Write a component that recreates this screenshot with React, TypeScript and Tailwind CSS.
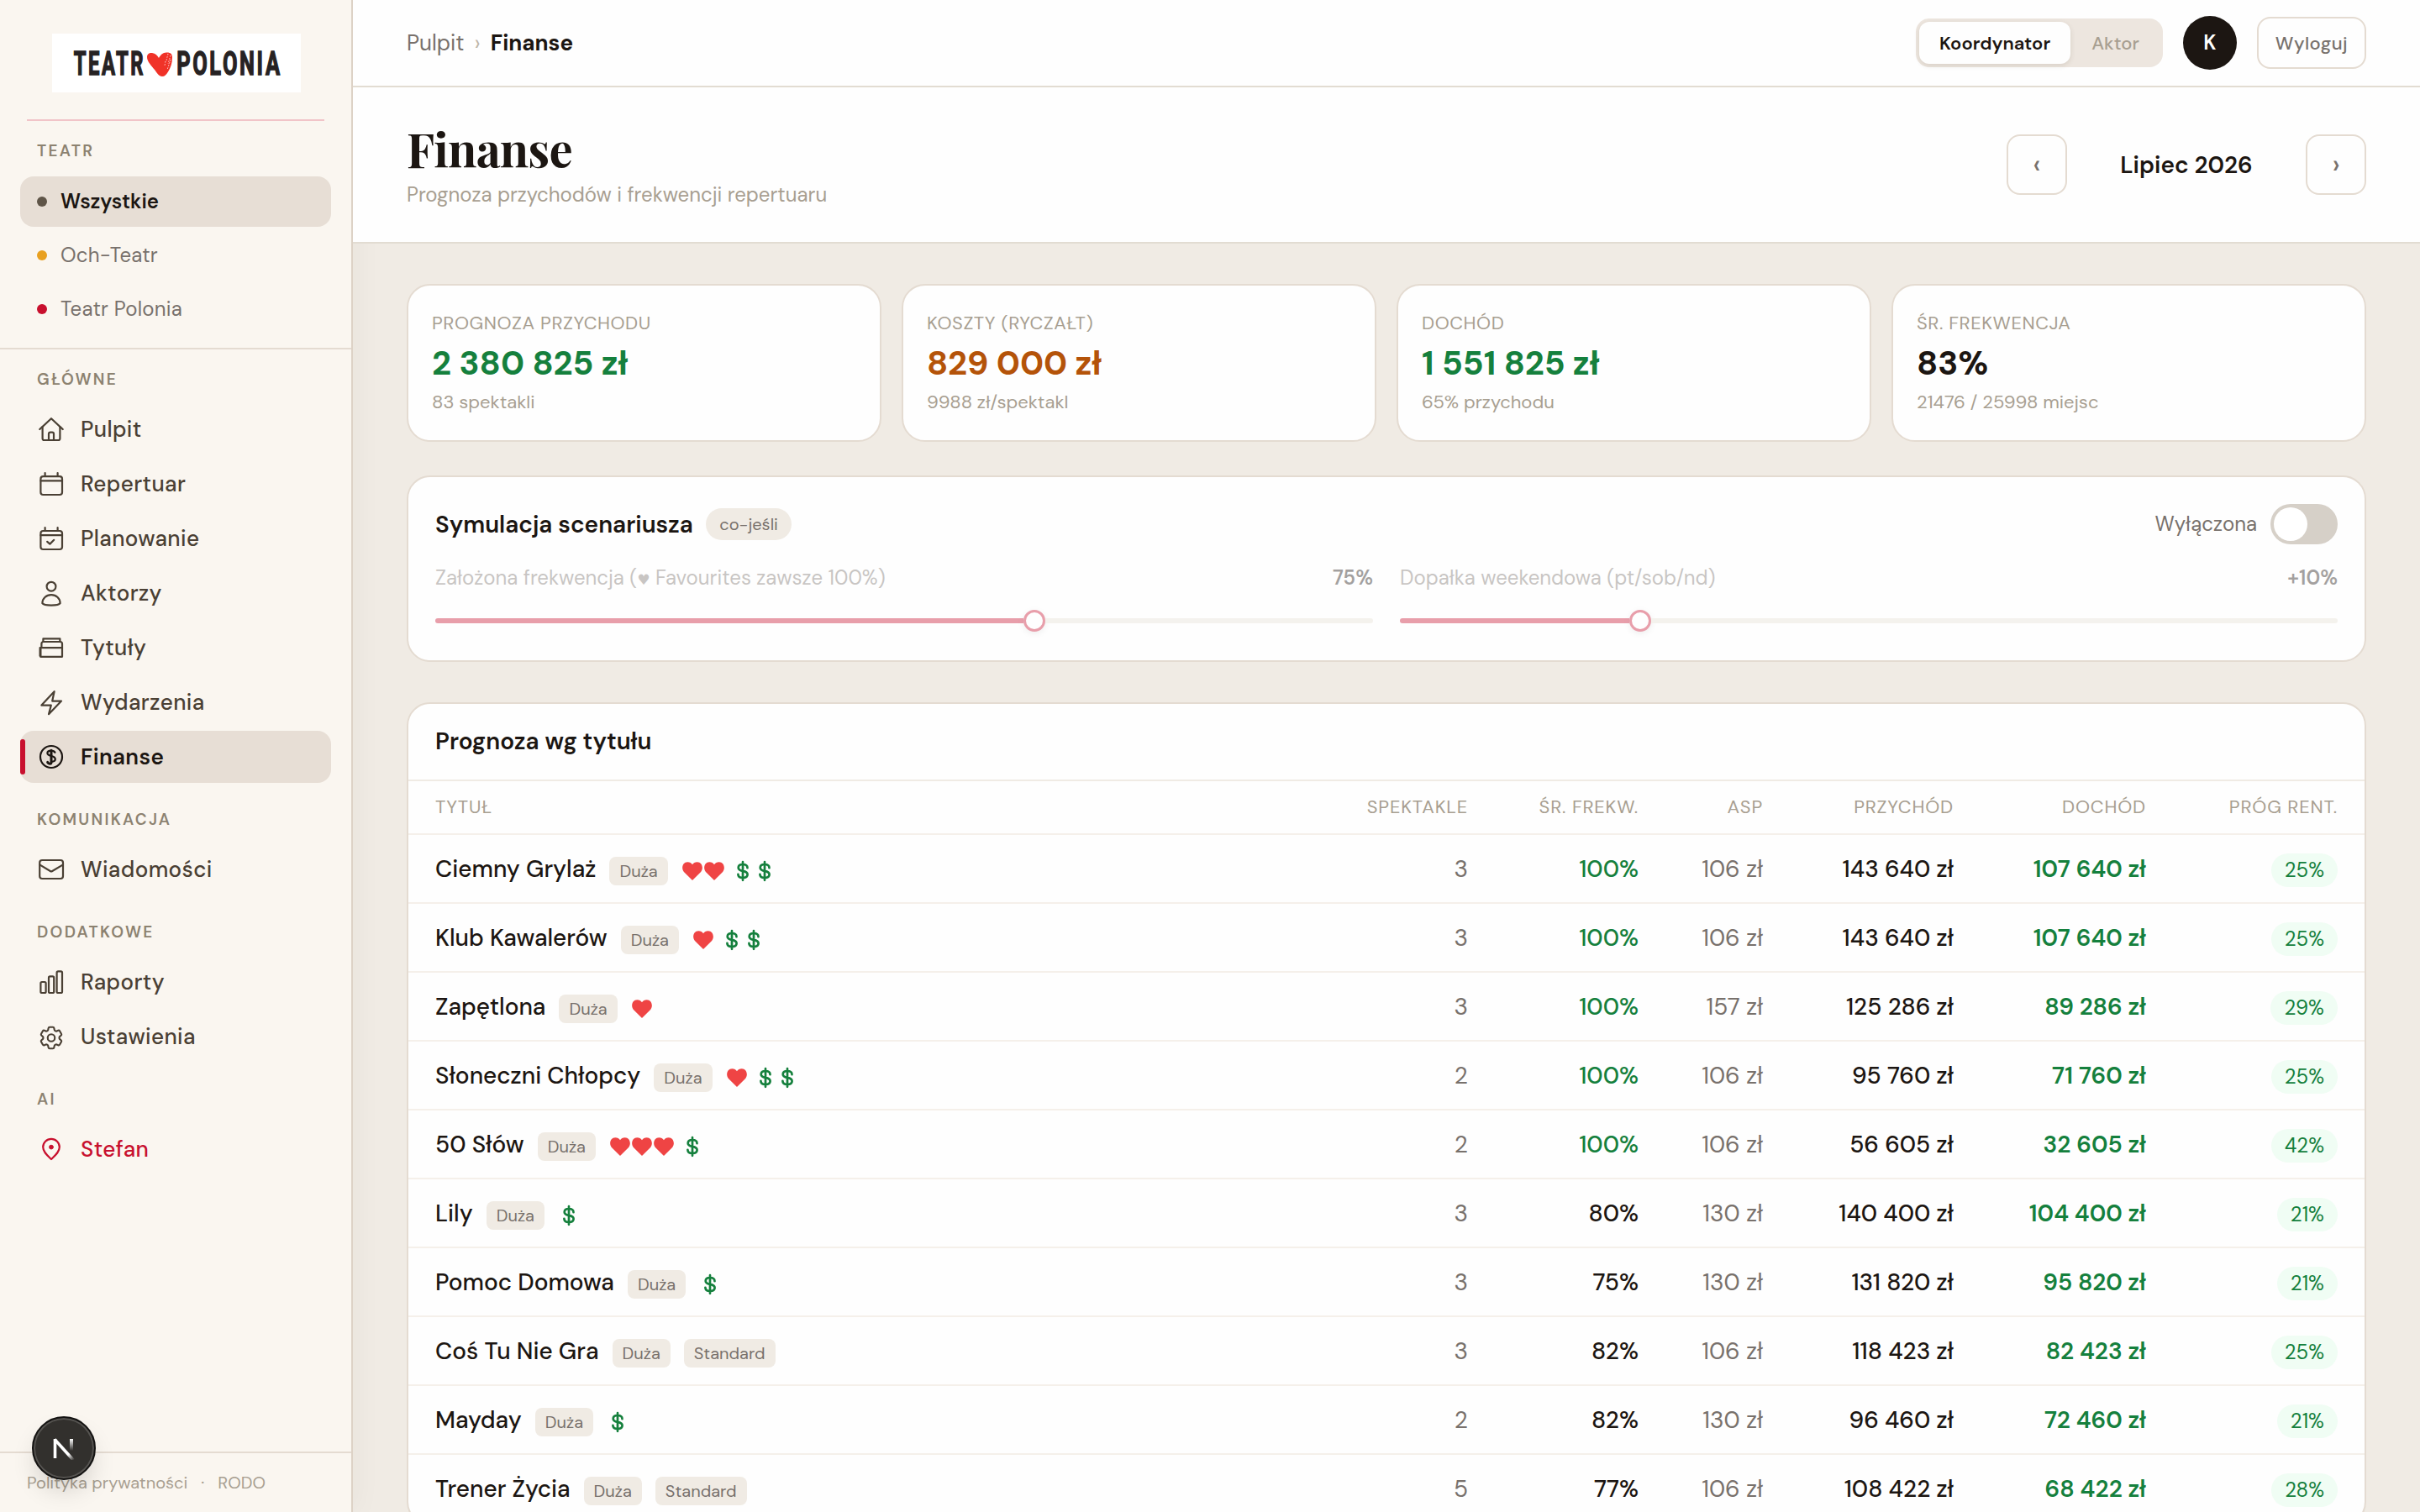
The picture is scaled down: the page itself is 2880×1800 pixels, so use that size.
import React, { ReactNode } from 'react';
import { HiOutlineCog6Tooth } from 'react-icons/hi2';

interface IconProps {
  children: ReactNode;
}

// Shared frame for the sidebar line icons
const Icon: React.FC<IconProps> = ({ children }) => (
  <svg viewBox="0 0 34 34" className="h-[34px] w-[34px] shrink-0" fill="none" stroke="currentColor" strokeWidth="2.2" strokeLinecap="round" strokeLinejoin="round">
    {children}
  </svg>
);

const icons: Record<string, ReactNode> = {
  home: (
    <Icon>
      <path d="M3.3 17 17 4.2 30.7 17" />
      <path d="M6.6 14.2V28a2 2 0 0 0 2 2h16.8a2 2 0 0 0 2-2V14.2" />
      <path d="M14 30v-7.4a2 2 0 0 1 2-2h2a2 2 0 0 1 2 2V30" />
    </Icon>
  ),
  calendar: (
    <Icon>
      <rect x="4.4" y="8.2" width="25.6" height="21.8" rx="3" />
      <path d="M4.4 13.4H30M9.6 4v4M24.6 4v4" />
    </Icon>
  ),
  plan: (
    <Icon>
      <rect x="4.4" y="8" width="25.6" height="22" rx="3" />
      <path d="M4.4 13.2H30M9.6 4v4M24.6 4v4" />
      <path d="m12.2 20.8 3.2 2.8 4.8-4.8" />
    </Icon>
  ),
  user: (
    <Icon>
      <circle cx="17" cy="9.2" r="5.4" />
      <path d="M6.4 29.2c0-5.8 4.6-10 10.6-10s10.6 4.2 10.6 10c-1 1.6-5.6 2.4-10.6 2.4s-9.6-.8-10.6-2.4Z" />
    </Icon>
  ),
  titles: (
    <Icon>
      <path d="M7.4 9.6V6.4h20v3.2" />
      <path d="M5.4 17v-4.6a2.4 2.4 0 0 1 2.4-2.4h19.8a2.4 2.4 0 0 1 2.4 2.4v15.4H4.2" />
      <path d="M3.6 17.2H30" />
      <path strokeWidth="3" d="M4 18.6v8" />
    </Icon>
  ),
  bolt: (
    <Icon>
      <path d="M20.6 4.2 5.4 20.6h11.4L14 31.2l15-15.6H18.2Z" />
    </Icon>
  ),
  money: (
    <Icon>
      <circle cx="17" cy="17" r="13" />
      <path d="M21.4 11.8c-.8-1.6-2.4-2.2-4.4-2.2-2.8 0-4.6 1-4.6 3s2 2.8 4.6 3.4 4.8 1.6 4.8 3.8-2.2 3-4.8 3" />
      <path strokeWidth="3" d="M17 9.2v14.6c0 1-.6 1.400-1.400 1.400-1.400 0-2.600-.6-3-1.800" />
    </Icon>
  ),
  mail: (
    <Icon>
      <rect x="3.2" y="6" width="27.8" height="22" rx="3" />
      <path d="m3.6 11.6 12.6 7.6c.5.3 1.1.3 1.6 0l12.8-7.6" />
    </Icon>
  ),
  bars: (
    <Icon>
      <rect x="4.4" y="17" width="6.2" height="13" rx="1.6" />
      <rect x="14" y="10.4" width="6.2" height="19.6" rx="1.6" />
      <rect x="23.6" y="4.4" width="6.4" height="25.6" rx="1.6" />
    </Icon>
  ),
  gear: <HiOutlineCog6Tooth className="h-[35px] w-[34px] shrink-0 translate-y-px" />,
  pin: (
    <Icon>
      <path d="M17 29C12.6 24.8 7.2 20.6 7.2 14.6a9.8 9.8 0 0 1 19.6 0c0 6-5.4 10.2-9.8 14.4Z" />
      <circle cx="17" cy="14.6" r="2.4" fill="currentColor" strokeWidth="1" />
    </Icon>
  ),
};

const theatres = [
  { name: 'Wszystkie', dot: 'bg-[#5f5548]', active: true },
  { name: 'Och-Teatr', dot: 'bg-[#e8a020]', active: false },
  { name: 'Teatr Polonia', dot: 'bg-[#c8102e]', active: false },
];

const sections = [
  {
    label: 'GŁÓWNE',
    items: [
      { name: 'Pulpit', icon: 'home' },
      { name: 'Repertuar', icon: 'calendar' },
      { name: 'Planowanie', icon: 'plan' },
      { name: 'Aktorzy', icon: 'user' },
      { name: 'Tytuły', icon: 'titles' },
      { name: 'Wydarzenia', icon: 'bolt' },
      { name: 'Finanse', icon: 'money' },
    ],
  },
  { label: 'KOMUNIKACJA', items: [{ name: 'Wiadomości', icon: 'mail' }] },
  {
    label: 'DODATKOWE',
    items: [
      { name: 'Raporty', icon: 'bars' },
      { name: 'Ustawienia', icon: 'gear' },
    ],
  },
  { label: 'AI', items: [{ name: 'Stefan', icon: 'pin' }] },
];

const stats = [
  { label: 'PROGNOZA PRZYCHODU', value: '2 380 825 zł', sub: '83 spektakli', color: 'text-[#15803d]' },
  { label: 'KOSZTY (RYCZAŁT)', value: '829 000 zł', sub: '9988 zł/spektakl', color: 'text-[#b45309]' },
  { label: 'DOCHÓD', value: '1 551 825 zł', sub: '65% przychodu', color: 'text-[#15803d]' },
  { label: 'ŚR. FREKWENCJA', value: '83%', sub: '21476 / 25998 miejsc', color: 'text-[#1c1612]' },
];

interface Title {
  name: string;
  tags: string[];
  hearts: number;
  dollars: number;
  shows: number;
  fill: number;
  asp: string;
  revenue: string;
  profit: string;
  threshold: string;
}

const titles: Title[] = [
  { name: 'Ciemny Grylaż', tags: ['Duża'], hearts: 2, dollars: 2, shows: 3, fill: 100, asp: '106 zł', revenue: '143 640 zł', profit: '107 640 zł', threshold: '25%' },
  { name: 'Klub Kawalerów', tags: ['Duża'], hearts: 1, dollars: 2, shows: 3, fill: 100, asp: '106 zł', revenue: '143 640 zł', profit: '107 640 zł', threshold: '25%' },
  { name: 'Zapętlona', tags: ['Duża'], hearts: 1, dollars: 0, shows: 3, fill: 100, asp: '157 zł', revenue: '125 286 zł', profit: '89 286 zł', threshold: '29%' },
  { name: 'Słoneczni Chłopcy', tags: ['Duża'], hearts: 1, dollars: 2, shows: 2, fill: 100, asp: '106 zł', revenue: '95 760 zł', profit: '71 760 zł', threshold: '25%' },
  { name: '50 Słów', tags: ['Duża'], hearts: 3, dollars: 1, shows: 2, fill: 100, asp: '106 zł', revenue: '56 605 zł', profit: '32 605 zł', threshold: '42%' },
  { name: 'Lily', tags: ['Duża'], hearts: 0, dollars: 1, shows: 3, fill: 80, asp: '130 zł', revenue: '140 400 zł', profit: '104 400 zł', threshold: '21%' },
  { name: 'Pomoc Domowa', tags: ['Duża'], hearts: 0, dollars: 1, shows: 3, fill: 75, asp: '130 zł', revenue: '131 820 zł', profit: '95 820 zł', threshold: '21%' },
  { name: 'Coś Tu Nie Gra', tags: ['Duża', 'Standard'], hearts: 0, dollars: 0, shows: 3, fill: 82, asp: '106 zł', revenue: '118 423 zł', profit: '82 423 zł', threshold: '25%' },
  { name: 'Mayday', tags: ['Duża'], hearts: 0, dollars: 1, shows: 2, fill: 82, asp: '130 zł', revenue: '96 460 zł', profit: '72 460 zł', threshold: '21%' },
  { name: 'Trener Życia', tags: ['Duża', 'Standard'], hearts: 0, dollars: 0, shows: 5, fill: 77, asp: '106 zł', revenue: '108 422 zł', profit: '68 422 zł', threshold: '28%' },
];

const columns = ['SPEKTAKLE', 'ŚR. FREKW.', 'ASP', 'PRZYCHÓD', 'DOCHÓD', 'PRÓG RENT.'];

const Heart = () => (
  <svg viewBox="0 0 26 26" className="h-[26px] w-[26px]" fill="#ef4444">
    <path d="M13 24 2.900 13.900C-.6 9.900 1.300 2.300 7.300 2.300c2.500 0 4.500 1.100 5.700 3 1.200-1.900 3.200-3 5.700-3 6 0 7.900 7.600 4.400 11.600Z" />
  </svg>
);

const Dollar = () => (
  <svg viewBox="0 0 26 26" className="h-[26px] w-[26px]" fill="none" stroke="#15803d" strokeWidth="2.7" strokeLinecap="round">
    <path d="M13 2.200v21.600M18.500 9.200c0-2.800-2.400-4.200-5.500-4.200s-5.300 1.400-5.300 3.900 2.200 3.400 5.300 4 5.600 1.500 5.600 4.200-2.500 3.900-5.600 3.900-5.600-1.400-5.600-4.200" />
  </svg>
);

const Logo = () => (
  <svg viewBox="0 0 296 70" className="h-[70px] w-[296px] bg-white">
    <g transform="scale(.6 1)" fill="#262223" stroke="#262223" strokeWidth="1.4" fontFamily="Roboto, sans-serif" fontWeight="700" fontSize="39" letterSpacing="4">
      <text x="43" y="49.5" textLength="142" lengthAdjust="spacingAndGlyphs">TEATR</text>
      <text x="247" y="49.5" textLength="209" lengthAdjust="spacingAndGlyphs">POLONIA</text>
    </g>
    <path fill="#f03228" d="M131 51c-4 0-6-4-9-8-4-5-9-10-9-15 0-4 3-5.5 6-5 4 .5 6 3 8 6 2-3.5 5-7 10-6.5 4 0 6 2 6 6 0 7-2 12-5 17-2 3.5-4 5.5-7 5.5Z" />
    <path stroke="#fff" strokeWidth=".8" strokeDasharray="1.5 1.8" fill="none" d="m138 24-2 8m5-6-3 10m3-5-4 12m-2-10-1 5" />
  </svg>
);

const Sidebar = () => (
  <aside className="relative z-10 flex w-[420px] shrink-0 flex-col border-r-2 border-[#ddd2c6] bg-[#faf6f0] shadow-[4px_0_32px_rgba(60,40,20,0.04)]">
    <div className="flex justify-center pt-10 pl-0.5">
      <Logo />
    </div>
    <div className="mx-8 mt-8 h-0.5 bg-[#f1c4c8]" />

    <div className="border-b-2 border-[#e4dbd1] px-6 pb-4">
      <p className="px-5 pt-[25px] pb-[19px] text-[19px] leading-[22px] font-semibold tracking-[0.12em] text-[#8c8270]">TEATR</p>
      <div className="flex flex-col gap-1">
        {theatres.map((t) => (
          <div
            key={t.name}
            className={
              t.active
                ? 'flex h-[60px] items-center gap-4 rounded-2xl bg-[#e7ded5] px-5 text-2xl font-semibold text-[#1c1612]'
                : 'flex h-[60px] items-center gap-4 rounded-2xl px-5 text-2xl tracking-[0.01em] text-[#78716c]'
            }
          >
            <span className={`h-3 w-3 rounded-full ${t.dot}`} />
            {t.name}
          </div>
        ))}
      </div>
    </div>

    <nav className="px-6">
      {sections.map((s, i) => (
        <div key={s.label}>
          <p className={`px-5 pb-[17px] text-[19px] leading-[22px] font-semibold tracking-[0.12em] text-[#8c8270] ${i === 0 ? 'pt-[25px]' : 'pt-[33px]'}`}>
            {s.label}
          </p>
          <div className="flex flex-col gap-[3px]">
            {s.items.map((item) => {
              const active = item.name === 'Finanse';
              const color = active ? 'bg-[#e7ded5] font-semibold text-[#1c1612]' : item.name === 'Stefan' ? 'font-medium text-[#c8102e]' : 'font-medium text-[#4a4034]';
              return (
                <div key={item.name} className={`relative flex h-[62px] items-center gap-[18px] rounded-2xl px-5 text-[26px] tracking-[0.015em] ${color}`}>
                  {active && <span className="absolute left-0 h-[42px] w-1.5 rounded-full bg-[#c8102e]" />}
                  {icons[item.icon]}
                  {item.name}
                </div>
              );
            })}
          </div>
        </div>
      ))}
    </nav>

    <footer className="mt-auto flex h-[72px] items-center gap-4 border-t-2 border-[#e4dbd1] px-8 text-xl text-[#a89f91]">
      <span>Polityka prywatności</span>
      <span>·</span>
      <span>RODO</span>
    </footer>

    {/* dev tools badge */}
    <div className="absolute bottom-[38px] left-[38px] flex h-[76px] w-[76px] items-center justify-center rounded-full border-2 border-[#141312] bg-[#32302d] shadow-[inset_0_0_0_2px_#555350,0_16px_32px_-8px_rgba(0,0,0,0.2)]">
      <svg viewBox="0 0 28 28" className="h-7 w-7" fill="none" strokeWidth="3.6">
        <defs>
          <linearGradient id="diag" x1="14" y1="14" x2="26" y2="28" gradientUnits="userSpaceOnUse">
            <stop offset="0.5" stopColor="#fff" />
            <stop offset="1" stopColor="#fff" stopOpacity="0" />
          </linearGradient>
          <linearGradient id="stem" x1="0" y1="3" x2="0" y2="17" gradientUnits="userSpaceOnUse">
            <stop stopColor="#fff" />
            <stop offset="1" stopColor="#fff" stopOpacity="0" />
          </linearGradient>
        </defs>
        <path stroke="#fff" d="M3.5 26V3" />
        <path stroke="url(#diag)" d="M3 3.5 26 29" />
        <rect x="21" y="3" width="4" height="15" fill="url(#stem)" />
      </svg>
    </div>
  </aside>
);

const Topbar = () => (
  <header className="flex h-[104px] items-center justify-between border-b-2 border-[#e2dcd2] bg-[#fefefe] px-16">
    <div className="flex items-center gap-3 text-[26px]">
      <span className="text-[#78716c]">Pulpit</span>
      <span className="text-[#bfb6a8]">›</span>
      <span className="font-bold text-[#1c1612]">Finanse</span>
    </div>
    <div className="flex items-center gap-6">
      <div className="flex h-[58px] gap-px rounded-2xl bg-[#ede6df] p-1 text-[22px] font-semibold">
        <span className="flex items-center rounded-xl bg-[#fefefe] px-6 text-[#1c1612] shadow-[0_2px_6px_rgba(60,40,20,0.12)]">Koordynator</span>
        <span className="flex items-center px-6 font-medium text-[#a89f91]">Aktor</span>
      </div>
      <span className="flex h-16 w-16 items-center justify-center rounded-full bg-[#1c1612] text-2xl font-semibold text-white">K</span>
      <span className="flex h-[62px] items-center rounded-2xl border-2 border-[#e4dbd1] px-5 text-[22px] font-medium tracking-[0.02em] text-[#78716c]">Wyloguj</span>
    </div>
  </header>
);

const PageHeader = () => (
  <section className="flex h-[186px] items-start justify-between border-b-2 border-[#e2dcd2] bg-[#fefefe] px-16 pt-10">
    <div>
      <h1 className="font-['Playfair_Display','Liberation_Serif',serif] text-[56px] leading-[66px] font-bold tracking-[-0.015em] text-[#1c1612]">Finanse</h1>
      <p className="mt-1 text-2xl leading-9 text-[#a89f91]">Prognoza przychodów i frekwencji repertuaru</p>
    </div>
    <div className="mt-4 flex items-center gap-4 text-[28px] text-[#78716c]">
      <span className="flex h-[72px] w-[72px] items-center justify-center rounded-2xl border-2 border-[#e4dbd1] text-[32px] font-medium">‹</span>
      <span className="w-[252px] pt-0.5 text-center font-semibold text-[#1c1612]">Lipiec 2026</span>
      <span className="flex h-[72px] w-[72px] items-center justify-center rounded-2xl border-2 border-[#e4dbd1] text-[32px] font-medium">›</span>
    </div>
  </section>
);

interface SliderProps {
  label: ReactNode;
  value: string;
  ratio: number;
}

const Slider: React.FC<SliderProps> = ({ label, value, ratio }) => (
  <div>
    <div className="flex h-9 justify-between text-2xl leading-9">
      <span className="text-[#78716c]">{label}</span>
      <span className="font-semibold text-[#1c1612]">{value}</span>
    </div>
    <div className="mt-5 flex h-[26px] items-center">
      <div className="h-1.5 rounded-l-full bg-[#c8102e]" style={{ width: `calc((100% - 26px) * ${ratio})` }} />
      <div className="h-[26px] w-[26px] shrink-0 rounded-full border-[3px] border-[#c8102e] bg-white shadow-[0_2px_6px_rgba(0,0,0,0.15)]" />
      <div className="h-1.5 flex-1 rounded-r-full bg-[#e7e1d6]" />
    </div>
  </div>
);

const Simulation = () => (
  <section className="mt-10 h-[222px] rounded-[28px] border-2 border-[#e4dbd1] bg-[#fefefe] px-8 pt-8">
    <div className="flex h-12 items-center justify-between">
      <div className="flex items-center gap-[15px]">
        <h2 className="pt-0.5 text-[28px] font-semibold text-[#1c1612]">Symulacja scenariusza</h2>
        <span className="flex h-[38px] items-center rounded-full bg-[#f0ebe4] px-[16.5px] text-xl text-[#78716c]">co-jeśli</span>
      </div>
      <div className="flex items-center gap-4">
        <span className="text-2xl text-[#78716c]">Wyłączona</span>
        <span className="flex h-12 w-20 items-center rounded-full bg-[#d6d0c8] px-1">
          <span className="h-10 w-10 rounded-full bg-white" />
        </span>
      </div>
    </div>
    <div className="mt-[22px] grid grid-cols-2 gap-8 opacity-40">
      <Slider label={<>Założona frekwencja (<span className="font-['DejaVu_Sans',sans-serif] text-[17px] leading-none">♥</span> Favourites zawsze 100%)</>} value="75%" ratio={0.642} />
      <Slider label="Dopałka weekendowa (pt/sob/nd)" value="+10%" ratio={0.25} />
    </div>
  </section>
);

const TitleTable = () => (
  <section className="mt-12 rounded-[28px] border-2 border-[#e4dbd1] bg-[#fefefe]">
    <h2 className="flex h-[92px] items-center border-b-2 border-[#f0ebe4] px-8 text-[28px] font-semibold text-[#1c1612]">Prognoza wg tytułu</h2>
    <div className="grid h-16 grid-cols-[1fr_200px_203px_148px_227px_229px_228px] items-center border-b-2 border-[#f5f0ea] px-8 pb-0.5 text-right text-[22px] tracking-[0.037em] text-[#a89f91]">
      <span className="text-left">TYTUŁ</span>
      {columns.map((c) => (
        <span key={c}>{c}</span>
      ))}
    </div>
    {titles.map((t) => (
      <div
        key={t.name}
        className="grid h-[82px] grid-cols-[1fr_200px_203px_148px_227px_229px_228px] items-center border-b-2 border-[#f5f0ea] px-8 pt-0.5 text-right text-[28px] text-[#78716c]"
      >
        <div className="flex items-center gap-4">
          <span className="font-medium text-[#1c1612]">{t.name}</span>
          {t.tags.map((tag) => (
            <span key={tag} className="mt-1 flex h-[34px] items-center rounded-lg bg-[#f0ebe4] px-3 text-xl">{tag}</span>
          ))}
          {t.hearts + t.dollars > 0 && (
            <div className="mt-1 flex gap-2">
              {t.hearts > 0 && <div className="flex">{Array.from({ length: t.hearts }, (_, i) => <Heart key={i} />)}</div>}
              {t.dollars > 0 && <div className="flex">{Array.from({ length: t.dollars }, (_, i) => <Dollar key={i} />)}</div>}
            </div>
          )}
        </div>
        <span>{t.shows}</span>
        <span className={t.fill === 100 ? 'font-medium text-[#15803d]' : 'font-medium text-[#1c1612]'}>{t.fill}%</span>
        <span>{t.asp}</span>
        <span className="font-medium text-[#1c1612]">{t.revenue}</span>
        <span className="font-semibold text-[#15803d]">{t.profit}</span>
        <span className="mt-0.5 flex h-10 items-center justify-self-end rounded-full bg-[#f0fdf4] px-4 text-2xl text-[#15803d]">{t.threshold}</span>
      </div>
    ))}
  </section>
);

export default function App() {
  return (
    <div className="flex h-screen overflow-hidden bg-[#f0ebe4] font-['DM_Sans','Inter',sans-serif]">
      <Sidebar />
      <div className="flex min-w-0 flex-1 flex-col">
        <div className="relative z-20">
          <Topbar />
          <PageHeader />
        </div>
        <main className="flex-1 overflow-hidden px-16 pt-12">
          <div className="grid grid-cols-4 gap-6">
            {stats.map((s) => (
              <div key={s.label} className="h-[188px] rounded-[28px] border-2 border-[#e4dbd1] bg-[#fefefe] px-7 pt-7 text-[22px] leading-[33px] text-[#a89f91]">
                <p className="tracking-[0.025em]">{s.label}</p>
                <p className={`pt-0.5 text-[40px] leading-[59px] font-bold ${s.color}`}>{s.value}</p>
                <p>{s.sub}</p>
              </div>
            ))}
          </div>
          <Simulation />
          <TitleTable />
        </main>
      </div>
    </div>
  );
}
